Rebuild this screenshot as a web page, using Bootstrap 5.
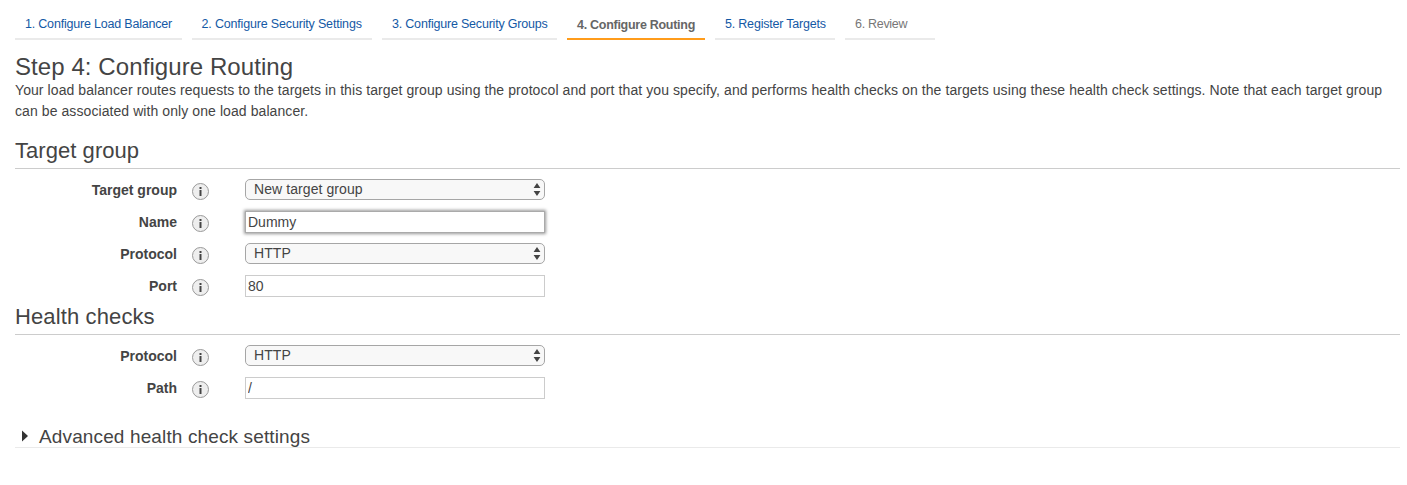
<!DOCTYPE html>
<html lang="en">
<head>
<meta charset="utf-8">
<meta name="viewport" content="width=device-width, initial-scale=1">
<title>Step 4: Configure Routing</title>
<link href="https://cdn.jsdelivr.net/npm/bootstrap@5.3.0/dist/css/bootstrap.min.css" rel="stylesheet">
<style>
body{font-family:"Liberation Sans",Arial,sans-serif;font-size:14px;line-height:21px;color:#444;background:#fff}
.page{padding:8px 7px 0 15px}
.steps{gap:10px}
.steps .nav-link{height:32px;padding:7px 0 0 10px;border-bottom:2px solid #eaeaea;font-size:12.5px;line-height:18px;color:#1459a5;white-space:nowrap}
.steps .nav-link.active{border-color:#ff9c1b;color:#666;font-weight:700;padding-top:8px}
.steps .nav-link.disabled{color:#777}
.w1{width:167px;letter-spacing:-.2px}.steps .w2{width:180px;letter-spacing:-.17px;padding-left:9.5px}.w3{width:175px;letter-spacing:-.2px}
.w4{width:138px;letter-spacing:-.28px}.w5{width:120px;letter-spacing:-.2px}.w6{width:90px;letter-spacing:-.3px}
h1{font-size:24px;line-height:30px;margin:12px 0 0;height:28px;font-weight:400;letter-spacing:.08px}
.intro{height:42px;margin:0;white-space:nowrap;letter-spacing:.08px}
h2{font-size:22px;line-height:30px;font-weight:400;margin:0;height:33px;border-bottom:1px solid #ccc;letter-spacing:.05px}
.target{margin-top:14px}
.health{margin-top:-5px}
.health h2{letter-spacing:.12px}
.fields{padding-top:10px}
.field{height:32px}
.field label{width:162px;text-align:right;font-weight:700;line-height:22px}
.info{width:17px;height:17px;margin:4px 36px 0 15px;flex:none}
.pick{position:relative;width:300px;height:21px}
.pick .form-select{height:21px;min-height:0;border:1px solid #a6a6a6;border-radius:5px;background:#f8f8f8;padding:0 24px 0 8px;font-size:14px;line-height:19px;color:#444;letter-spacing:.08px}
.pick svg{position:absolute;right:4px;top:4px;width:8px;height:13px;pointer-events:none}
.field .form-control{width:300px;height:22px;min-height:0;border:1px solid #ccc;border-radius:0;padding:0 2px;font-size:14px;line-height:20px;color:#444}
.field .form-control.current{border-color:#aaa;box-shadow:0 0 3px 1px #999}
.advanced{margin-top:15px;height:24px;border-bottom:1px solid #eaeaea;font-size:19px;line-height:26px;letter-spacing:.13px}
.advanced svg{width:7px;height:12px;margin:6px 10px 0 7px}
</style>
</head>
<body>
<svg class="d-none">
<symbol id="info" viewBox="0 0 17 17"><circle cx="8.5" cy="8.5" r="8" fill="#eee" stroke="#999"/><path d="M7.5 4h2v2h-2zM7.5 7h2v6h-2z" fill="#444"/></symbol>
<symbol id="arrows" viewBox="0 0 8 13"><path d="M4 0l3.4 5h-6.8zM4 13l3.4-5h-6.8z" fill="#444"/></symbol>
</svg>
<main class="page">
<nav class="nav steps flex-nowrap">
<a class="nav-link w1" href="#"><span>1. Configure Load Balancer</span></a>
<a class="nav-link w2" href="#"><span>2. Configure Security Settings</span></a>
<a class="nav-link w3" href="#"><span>3. Configure Security Groups</span></a>
<a class="nav-link w4 active" href="#"><span>4. Configure Routing</span></a>
<a class="nav-link w5" href="#"><span>5. Register Targets</span></a>
<a class="nav-link w6 disabled" href="#"><span>6. Review</span></a>
</nav>
<h1><span>Step 4: Configure Routing</span></h1>
<p class="intro"><span>Your load balancer routes requests to the targets in this target group using the protocol and port that you specify, and performs health checks on the targets using these health check settings. Note that each target group</span><br><span>can be associated with only one load balancer.</span></p>
<section class="target">
<h2><span>Target group</span></h2>
<div class="fields">
<div class="field d-flex align-items-start"><label for="group">Target group</label><svg class="info"><use href="#info"/></svg><div class="pick"><select id="group" class="form-select"><option>New target group</option></select><svg><use href="#arrows"/></svg></div></div>
<div class="field d-flex align-items-start"><label for="name">Name</label><svg class="info"><use href="#info"/></svg><input id="name" class="form-control current" value="Dummy"></div>
<div class="field d-flex align-items-start"><label for="proto">Protocol</label><svg class="info"><use href="#info"/></svg><div class="pick"><select id="proto" class="form-select"><option>HTTP</option></select><svg><use href="#arrows"/></svg></div></div>
<div class="field d-flex align-items-start"><label for="port">Port</label><svg class="info"><use href="#info"/></svg><input id="port" class="form-control" value="80"></div>
</div>
</section>
<section class="health">
<h2><span>Health checks</span></h2>
<div class="fields">
<div class="field d-flex align-items-start"><label for="hproto">Protocol</label><svg class="info"><use href="#info"/></svg><div class="pick"><select id="hproto" class="form-select"><option>HTTP</option></select><svg><use href="#arrows"/></svg></div></div>
<div class="field d-flex align-items-start"><label for="path">Path</label><svg class="info"><use href="#info"/></svg><input id="path" class="form-control" value="/"></div>
</div>
</section>
<div class="advanced d-flex align-items-start"><svg viewBox="0 0 7 12"><path d="M0 .5l6 5.5-6 5.5z" fill="#333"/></svg><span>Advanced health check settings</span></div>
</main>
<script src="https://cdn.jsdelivr.net/npm/bootstrap@5.3.0/dist/js/bootstrap.bundle.min.js"></script>
</body>
</html>
